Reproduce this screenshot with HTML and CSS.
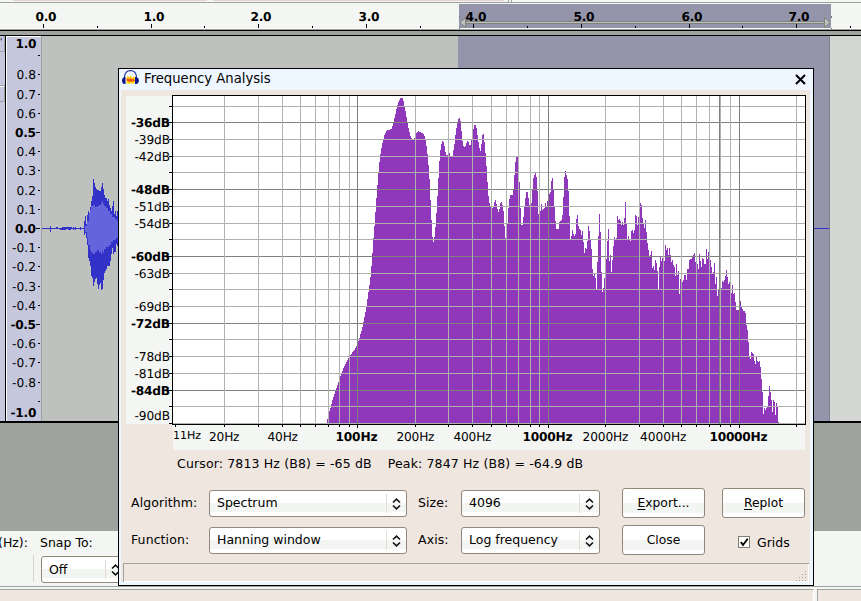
FILE: index.html
```html
<!DOCTYPE html>
<html lang="en">
<head>
  <meta charset="UTF-8">
  <title>Frequency Analysis</title>
  <link rel="stylesheet" href="styles.css">
</head>
<body>
  <div class="app">
    <div class="toolbar-edge">
      <span class="edge-a"></span><span class="edge-b"></span><span class="edge-grip"></span><span class="edge-c"></span>
    </div>

    <!-- Timeline ruler -->
    <svg class="timeline" width="861" height="26" viewBox="0 3 861 26" shape-rendering="crispEdges">
      <rect x="459" y="4" width="372" height="24" fill="#9494aa"/>
      <rect x="0" y="28" width="861" height="1" fill="#fff" opacity=".5"/>
      <g id="timelineMarks"></g>
      <rect x="465" y="21" width="359" height="3" fill="#80807c"/>
      <rect x="465" y="22" width="359" height="1" fill="#bfc1be"/>
      <g shape-rendering="auto" fill="#bfc1be" stroke="#80807c">
        <path d="M465.5 17.5v10L460 22.5z"/>
        <path d="M824.5 17.5v10L830 22.5z"/>
      </g>
      <path d="M459.5 16v2M459.5 28v1M831.5 16v2M831.5 28v1" stroke="#777"/>
    </svg>
    <div class="ruler-gap"></div>

    <!-- Track -->
    <div class="track">
      <div class="track-panel">
        <div class="panel-title">'</div>
        <div class="panel-info"></div>
        <div class="panel-button"></div>
      </div>
      <svg class="amplitude" width="35" height="385" viewBox="6 36 35 385" shape-rendering="crispEdges">
        <g id="amplitudeMarks"></g>
      </svg>
      <div class="wave">
        <svg width="77" height="385" viewBox="42 36 77 385" shape-rendering="crispEdges">
          <path id="waveLine" stroke="#3232c8" d="M42 228.5h77M50.500 226v6M56 227.500h2M60 229.500h6M62 227.500h10M68 229.500h3M73.500 227v3M75.500 227v3M80.500 227v3"/>
          <path fill="#3232c8" d="M84 221H85V216H86V224H87V215H88V211H89V213H90V207H91V201H92V196H93V179H94V183H95V187H96V189H97V190H99V191H101V187H102V183H103V189H104V195H105V198H107V201H108V199H109V205H110V208H111V211H112V206H113V201H114V214H115V211H116V216H117V211H119V246H117V244H116V252H114V254H113V248H112V254H111V261H110V266H107V269H106V271H105V273H104V280H103V289H102V290H101V283H100V285H99V289H98V284H97V278H96V279H95V282H94V286H93V278H92V276H91V266H90V261H89V258H88V245H87V238H86V233H85V235H84Z"/>
          <path fill="#6464dc" d="M85 226H87V221H89V214H90V210H91V206H93V205H95V207H97V206H99V205H101V203H102V201H103V204H104V206H106V208H108V211H110V214H112V217H115V219H117V221H119V238H116V240H113V242H111V245H109V247H106V249H104V253H103V251H102V254H101V252H100V253H99V250H97V252H95V254H93V253H92V252H91V250H90V245H88V238H87V232H85Z"/>
        </svg>
      </div>
      <div class="wave-selected"><span class="zero-line"></span></div>
      <div class="wave-rest"></div>
    </div>

    <div class="track-empty"></div>

    <!-- Selection toolbar -->
    <div class="selection-bar">
      <div class="rate"><span>(Hz):</span></div>
      <div class="snap">
        <label>Snap To:</label>
        <div class="combo combo-snap">
          <span class="combo-text">Off</span>
          <svg class="arrows" width="9" height="12" viewBox="0 0 9 12"><path d="M1 4.500L4.500 1.200 8 4.500M1 7.500l3.500 3.300L8 7.500"/></svg>
        </div>
      </div>
    </div>
    <div class="statusbar">
      <div class="status-main"></div>
      <div class="status-side"></div>
    </div>
  </div>

  <!-- Frequency Analysis window -->
  <div class="dialog">
    <div class="titlebar">
      <svg class="logo" width="17" height="15" viewBox="0 0 17 15">
        <path d="M3.500 8V5.500Q4 1 8.500 1T13.500 5.500V8" fill="none" stroke="#fff" stroke-width="3"/>
        <path d="M2.500 7Q3 .6 8.500 .6T14.500 7" fill="none" stroke="#2030a0" stroke-width="1.100"/>
        <path d="M4.500 7l1.500-1 1 1.500 1.500-2L10 8l2-2 1 2v4l-2 2-2-1-2 1-2.500-1z" fill="#ffd800"/>
        <path d="M4 10l2-2 1 1.500L8.500 8 10 9.500l1.500-1L13 11l-3 .5-2 .5-2-.8z" fill="#f4501c"/>
        <path d="M3.500 7H2Q0 8 0 10.500T2 14h1.500zM13 7h1.500Q17 8 17 10.500T14.500 14H13z" fill="#0c1488"/>
      </svg>
      <span class="title">Frequency Analysis</span>
      <svg class="close" width="11" height="11" viewBox="0 0 11 11"><path d="M1 1l9 9M10 1l-9 9"/></svg>
    </div>

    <div class="dialog-body">
      <svg class="plot" width="680" height="355" viewBox="126 95 680 355" shape-rendering="crispEdges">
        <rect x="126" y="96" width="47" height="328" fill="#f4f6f3"/>
        <rect x="173" y="424" width="632" height="26" fill="#f4f6f3"/>
        <rect x="172.500" y="95.500" width="633" height="329" fill="#fff" stroke="#000"/>
        <path id="spectrum" fill="#9038bb"/>
        <g id="grid"></g>
        <g id="labels"></g>
      </svg>

      <div class="readout">
        <span class="cursor-text">Cursor: 7813 Hz (B8) = -65 dB</span>
        <span class="peak-text">Peak: 7847 Hz (B8) = -64.9 dB</span>
      </div>

      <div class="controls">
        <label>Algorithm:</label>
        <div class="combo">
          <span class="combo-text">Spectrum</span>
          <svg class="arrows" width="9" height="12" viewBox="0 0 9 12"><path d="M1 4.500L4.500 1.200 8 4.500M1 7.500l3.500 3.300L8 7.500"/></svg>
        </div>
        <label>Size:</label>
        <div class="combo">
          <span class="combo-text">4096</span>
          <svg class="arrows" width="9" height="12" viewBox="0 0 9 12"><path d="M1 4.500L4.500 1.200 8 4.500M1 7.500l3.500 3.300L8 7.500"/></svg>
        </div>
        <button class="btn"><u>E</u>xport...</button>
        <button class="btn"><u>R</u>eplot</button>

        <label>Function:</label>
        <div class="combo">
          <span class="combo-text">Hanning window</span>
          <svg class="arrows" width="9" height="12" viewBox="0 0 9 12"><path d="M1 4.500L4.500 1.200 8 4.500M1 7.500l3.500 3.300L8 7.500"/></svg>
        </div>
        <label>Axis:</label>
        <div class="combo">
          <span class="combo-text">Log frequency</span>
          <svg class="arrows" width="9" height="12" viewBox="0 0 9 12"><path d="M1 4.500L4.500 1.200 8 4.500M1 7.500l3.500 3.300L8 7.500"/></svg>
        </div>
        <button class="btn">Close</button>
        <div class="check">
          <svg width="13" height="13" viewBox="0 0 13 13">
            <rect x=".5" y=".5" width="11" height="11" fill="#fff" stroke="#857b70"/>
            <path d="M2.800 6l2.200 3L9.700 2.800" fill="none" stroke="#000" stroke-width="1.900"/>
          </svg>
          <span>Grids</span>
        </div>
      </div>

      <div class="dialog-status">
        <svg width="12" height="12" viewBox="0 0 12 12" shape-rendering="crispEdges">
          <path fill="#a8a097" d="M10 1h1v1h-1zM7 4h1v1h-1zM10 4h1v1h-1zM4 7h1v1h-1zM7 7h1v1h-1zM10 7h1v1h-1zM1 10h1v1h-1zM4 10h1v1h-1zM7 10h1v1h-1zM10 10h1v1h-1z"/>
        </svg>
      </div>
    </div>
  </div>

  <script src="script.js"></script>
</body>
</html>
```
FILE: styles.css
```css
body {
  margin: 0;
  width: 861px;
  height: 601px;
  overflow: hidden;
  font-family: "DejaVu Sans", sans-serif;
  font-size: 12.5px;
  color: #000;
  background: #f4f6f3;
}

svg {
  display: block;
  flex: none;
}

svg text {
  font-family: "DejaVu Sans", sans-serif;
  text-rendering: geometricPrecision;
}

.app {
  display: flex;
  flex-direction: column;
  height: 601px;
}

/* Timeline */
.toolbar-edge {
  display: flex;
  height: 2px;
  background: #f4f6f3;
  border-bottom: 1px solid #a0a29f;
}

.edge-a, .edge-b, .edge-c {
  height: 1px;
  background: #e2d4cc;
}

.edge-a {
  width: 194px;
  margin-left: 13px;
}

.edge-b {
  width: 291px;
  margin-left: 6px;
}

.edge-grip {
  box-sizing: border-box;
  width: 4px;
  height: 2px;
  margin-left: 4px;
  border: solid #a0a29f;
  border-width: 0 1px;
}

.edge-c {
  background: none;
}

.timeline {
  background: #f4f6f3;
}

.ruler-gap {
  box-sizing: border-box;
  height: 7px;
  background: #a0a29f;
  border-top: 1px solid #a0a29f;
  border-bottom: 1px solid #000;
  box-shadow: inset 0 1px #000;
}

/* Track */
.track {
  display: flex;
  height: 385px;
  border-bottom: 2px solid #000;
}

.track-panel {
  width: 5px;
  background: #c5c7dc;
  border-right: 1px solid #000;
}

.panel-title {
  box-sizing: border-box;
  height: 16px;
  border-right: 1px solid #a0a29f;
  border-bottom: 1px solid #a0a29f;
  font-size: 9px;
  line-height: 13px;
}

.panel-info {
  height: 33px;
  border-bottom: 1px solid #a0a29f;
}

.panel-button {
  box-sizing: border-box;
  height: 16px;
  border: solid #a0a29f;
  border-width: 0 1px 1px 0;
  box-shadow: inset 0 1px #fff;
}

.amplitude {
  background: #c5c7dc;
  box-shadow: inset 1px 1px #fff;
}

.wave {
  width: 416px;
  background: #bfc1be;
  border-left: 1px solid #a0a29f;
}

.wave-selected {
  display: flex;
  width: 371px;
  background: #9494aa;
  border-right: 1px solid #80808c;
}

.zero-line {
  width: 100%;
  height: 1px;
  margin-top: 192px;
  background: #3232c8;
}

.wave-rest {
  flex: 1;
  background: #d4d6d3;
}

.track-empty {
  height: 108px;
  background: #a0a29f;
}

/* Selection toolbar */
.selection-bar {
  display: flex;
  height: 55px;
  border-bottom: 1px solid #a0a29f;
}

.rate {
  width: 34px;
  white-space: nowrap;
  background: linear-gradient(#dcd2cc, #dcd2cc) right bottom 4px / 1px 27px no-repeat;
}

.rate span {
  display: block;
  margin: 4px 0 0 -2px;
}

.snap {
  width: 85px;
  margin: 4px 0 0 7px;
}

.snap label {
  display: block;
  height: 21px;
  margin-left: -1px;
}

.statusbar {
  display: flex;
  gap: 3px;
  height: 12px;
  padding-top: 2px;
}

.status-main, .status-side {
  background: #f0e6e0;
  border-top: 1px solid #a0a29f;
}

.status-main {
  width: 813px;
  border-right: 1px solid #fff;
}

.status-side {
  flex: 1;
  border-left: 1px solid #a0a29f;
}

/* Dialog window */
.dialog {
  position: absolute;
  left: 118px;
  top: 68px;
  box-sizing: border-box;
  width: 696px;
  height: 518px;
  border: 1px solid #000;
  background: #eef6ff;
}

.titlebar {
  display: flex;
  height: 21px;
  padding-left: 3px;
}

.logo {
  margin-top: 1px;
}

.title {
  margin-left: 5px;
  flex: 1;
  font-size: 13.200px;
  line-height: 19px;
}

.close {
  margin: 5px 7px 0 0;
  fill: none;
  stroke: #000;
  stroke-width: 2;
}

.dialog-body {
  height: 492px;
  margin: 0 3px 0 2px;
  background: #f0e6e0;
  overflow: hidden;
}

.plot {
  margin: 5px 0 0 5px;
}

.readout {
  display: flex;
  gap: 16px;
  height: 38px;
  padding-left: 56px;
  line-height: 28px;
  white-space: nowrap;
  letter-spacing: .15px;
}

.controls {
  display: grid;
  grid-template-columns: 78px 198px 54px 139px 83px 83px;
  grid-template-rows: 30px 30px;
  row-gap: 7px;
  align-items: center;
  padding-left: 10px;
}

.controls label {
  padding-bottom: 1px;
  letter-spacing: .1px;
}

.controls label:nth-child(6n + 3) {
  padding-left: 11px;
}

.controls .btn {
  margin-left: 22px;
}

.controls .btn + .btn {
  margin-left: 39px;
}

.combo {
  box-sizing: border-box;
  display: flex;
  align-items: center;
  height: 27px;
  padding-left: 7px;
  border: 1px solid #92877b;
  border-radius: 3px;
  background: linear-gradient(#fff 0 48%, #f3f5f2 48% 85%, #fff 85%);
  white-space: nowrap;
}

.combo-snap {
  width: 85px;
}

.combo-text {
  flex: 1;
  padding-bottom: 1px;
}

.arrows {
  box-sizing: content-box;
  padding: 4px 5px 3px;
  border-left: 1px solid #e6dad4;
  fill: none;
  stroke: #111;
  stroke-width: 1.600;
}

.btn {
  box-sizing: border-box;
  width: 83px;
  height: 30px;
  padding: 0 0 1px;
  border: 1px solid #92877b;
  border-radius: 3px;
  background: linear-gradient(#fff 0 50%, #f3f5f2 50% 85%, #fff 85%);
  font: inherit;
  font-size: 12.3px;
  color: #000;
}

.btn u {
  text-underline-offset: 2px;
}

.check {
  display: flex;
  align-items: center;
  gap: 6px;
  margin: 4px 0 0 55px;
}

.dialog-status {
  display: flex;
  justify-content: flex-end;
  align-items: flex-end;
  box-sizing: border-box;
  height: 19px;
  margin: 8px 1px 0 2px;
  padding-right: 2px;
  border: solid #a0a29f;
  border-width: 1px 0 0 1px;
  box-shadow: inset -1px -1px #fff;
}
```
FILE: script.js
```js
const SVG = "http://www.w3.org/2000/svg";

function rect(parent, x, y, w, h, fill) {
  const el = document.createElementNS(SVG, "rect");
  el.setAttribute("x", x);
  el.setAttribute("y", y);
  el.setAttribute("width", w);
  el.setAttribute("height", h);
  el.setAttribute("fill", fill);
  parent.appendChild(el);
}

function label(parent, text, x, y, size, bold, anchor, width) {
  const el = document.createElementNS(SVG, "text");
  el.textContent = text;
  el.setAttribute("x", x);
  el.setAttribute("y", y);
  el.setAttribute("font-size", size);
  el.setAttribute("text-anchor", anchor);
  if (bold) el.setAttribute("font-weight", "bold");
  if (width) el.setAttribute("textLength", width);
  parent.appendChild(el);
}

// Timeline: a second is about 107.6px, ticks every half second
const timeline = document.getElementById("timelineMarks");
[43, 151, 258, 366, 473, 581, 689, 796].forEach((x, i) => {
  rect(timeline, x, 24, 1, 4, "#000");
  label(timeline, i + ".0", x + 3, 21, 12.2, true, "middle", 21);
});
[97, 204, 312, 420, 527, 635, 742, 850].forEach(x => rect(timeline, x, 26, 1, 2, "#000"));

// Amplitude scale
const amplitude = document.getElementById("amplitudeMarks");
label(amplitude, "1.0", 36.5, 48, 12.2, true, "end", 21);
label(amplitude, "-1.0", 36.5, 417, 12.2, true, "end", 26);
[55, 74, 94, 113, 132, 151, 170, 190, 209, 228, 247, 266, 286, 305, 324, 343, 362, 382, 401].forEach((y, i) => {
  const value = (9 - i) / 10;
  const bold = value === 0.5 || value === -0.5 || value === 0;
  rect(amplitude, bold ? 36 : 38, y, bold ? 4 : 2, 1, "#000");
  if (Math.abs(value) < 0.9) {
    label(amplitude, value.toFixed(1), 36, y + 5, 12.2, bold, "end", (bold ? 21 : 19.5) + (value < 0 ? 4.5 : 0));
  }
});

// Spectrum, one column per point, each held until the next x
const points = `326,423 327,419 328,414 329,411 330,408 331,404 332,400 333,397 334,394 335,391 336,388 337,385
338,382 339,379 340,376 341,373 342,371 343,368 344,366 345,364 346,362 347,360 348,358 349,357 350,355 351,354
352,352 353,351 354,350 355,348 356,346 357,344 358,341 359,338 360,334 361,331 362,327 363,322 364,317 365,312
366,306 367,299 368,292 369,285 370,277 371,266 372,253 373,238 374,226 375,212 376,198 377,185 378,173 379,162
380,154 381,148 382,143 383,139 384,135 385,133 386,131 387,130 390,129 392,126 393,122 394,118 395,114 396,109
397,105 398,102 399,100 400,98 403,101 404,106 405,111 406,117 407,122 408,128 409,132 410,136 411,138 412,139
414,138 416,133 417,132 418,131 419,132 421,133 423,134 424,136 425,139 426,146 427,154 428,165 429,179 430,200
431,220 432,237 433,242 434,237 435,227 436,213 437,196 438,178 439,161 440,150 441,144 442,141 443,142 444,146
445,152 446,155 449,153 450,156 453,150 454,144 455,135 456,128 457,122 458,119 459,118 460,121 461,131 462,141
463,146 464,147 465,146 466,143 467,141 468,142 469,145 471,140 472,133 473,129 474,125 476,128 477,135 478,142
479,148 480,151 481,144 482,135 483,134 484,142 485,153 486,166 487,182 488,196 489,203 490,206 492,208 493,207
494,202 495,200 496,204 497,209 498,212 499,209 500,203 501,202 502,205 503,211 504,226 505,238 507,223 508,208
509,199 510,195 513,190 514,175 515,162 516,157 518,158 519,182 520,208 521,225 523,217 524,207 525,198 526,192
528,198 529,205 531,203 532,190 533,178 534,175 535,173 536,177 537,191 538,214 539,211 541,204 542,210 543,209
544,208 545,203 546,206 547,201 548,200 549,194 550,192 551,181 552,178 553,190 554,207 555,221 556,229 559,222
560,221 561,220 562,215 563,197 564,177 565,171 566,175 567,179 568,191 569,216 570,239 571,236 572,230 573,234
574,236 575,234 576,219 577,215 578,226 579,229 580,230 581,235 582,231 583,242 584,253 585,248 586,249 587,241
588,226 589,231 590,239 591,249 592,269 593,276 594,274 595,278 596,289 597,262 598,236 599,214 600,232 601,272
602,292 603,288 604,278 606,259 607,241 608,229 609,261 610,255 611,272 612,260 613,246 614,237 615,239 616,238
617,216 618,220 619,219 620,221 621,225 622,222 623,225 624,218 625,202 626,223 627,239 628,236 629,240 630,241
631,231 632,230 633,233 634,230 635,215 636,216 637,225 638,217 640,203 641,205 642,218 643,223 644,228 645,220
646,232 647,243 648,250 649,256 650,255 651,251 652,268 653,266 654,270 655,260 656,263 657,271 658,289 659,267
660,257 661,261 662,258 663,259 664,261 665,245 666,250 667,248 668,255 669,248 670,255 671,262 672,260 673,265
674,267 675,276 676,264 677,275 678,271 679,294 680,279 681,280 682,282 683,280 684,275 686,280 687,269 689,260
690,259 692,257 693,255 694,253 695,262 696,263 697,264 698,269 699,254 700,261 701,267 702,258 703,259 704,264
706,249 707,259 708,252 709,257 710,260 711,267 712,273 713,272 714,263 715,284 716,277 717,296 718,290 719,286
720,289 721,288 722,281 723,282 724,280 725,276 726,270 727,277 728,284 729,282 730,290 731,293 732,285 733,294
734,293 735,302 736,310 739,306 740,301 741,306 742,309 743,311 745,313 746,325 747,330 748,342 749,356 750,359
751,352 752,353 753,354 754,361 755,364 756,357 757,361 758,362 759,361 760,367 761,379 762,392 763,414 764,408
765,410 766,408 767,406 768,396 769,386 770,392 771,400 772,412 773,400 774,402 775,415 776,403 777,407 778,422
779,424`.split(/\s+/).map(p => p.split(","));

let d = "M326 424";
points.forEach(([x, y]) => d += `H${x}V${y}`);
document.getElementById("spectrum").setAttribute("d", d + "Z");

// Grid lines and tick marks
const grid = document.getElementById("grid");
const light = "#b0b0ae";
const dark = "#80807e";
const rows = [106, 122, 139, 156, 172, 189, 206, 223, 239, 256, 273, 289, 306, 323, 339, 356, 373, 390, 406, 423];
const majorRows = [122, 189, 256, 323, 390];
const cols = [224, 258, 282, 300, 315, 328, 339, 349, 357, 415, 448, 472, 491, 506, 518, 530, 539, 548,
  605, 639, 663, 681, 696, 709, 720, 730, 739, 796];
const majorCols = [357, 548, 739];

rows.forEach(y => {
  const major = majorRows.includes(y);
  rect(grid, 173, y, 632, 1, major ? dark : light);
  rect(grid, major ? 167 : 169, y, major ? 5 : 3, 1, "#000");
});
cols.forEach(x => {
  const major = majorCols.includes(x);
  rect(grid, x, 96, 1, 328, major ? dark : light);
  rect(grid, x, 425, 1, major ? 3 : 2, "#000");
});
rect(grid, 175, 425, 1, 2, "#000");
rect(grid, 719, 96, 1, 328, dark);

// Axis labels
const labels = document.getElementById("labels");
[[-36, 122], [-39, 139], [-42, 156], [-48, 189], [-51, 206], [-54, 223], [-60, 256], [-63, 273],
  [-69, 306], [-72, 323], [-78, 356], [-81, 373], [-84, 390], [-90, 415]].forEach(([db, y]) => {
  const major = db % 12 === 0;
  label(labels, db + "dB", 170, y + 5, 12.2, major, "end", major ? 39 : 35.5);
});
[["11Hz", 173, 28, 439], ["20Hz", 209, 30.5], ["40Hz", 267.5, 30.5], ["100Hz", 335.5, 42], ["200Hz", 396.500, 38],
  ["400Hz", 453.500, 38], ["1000Hz", 522.5, 50], ["2000Hz", 582.500, 46], ["4000Hz", 640, 46.500],
  ["10000Hz", 709.5, 58]].forEach(([text, x, width, y]) => {
  label(labels, text, x, y || 441, text === "11Hz" ? 11 : 12.2, text.includes("00Hz") && text[0] === "1", "start", width);
});
```
